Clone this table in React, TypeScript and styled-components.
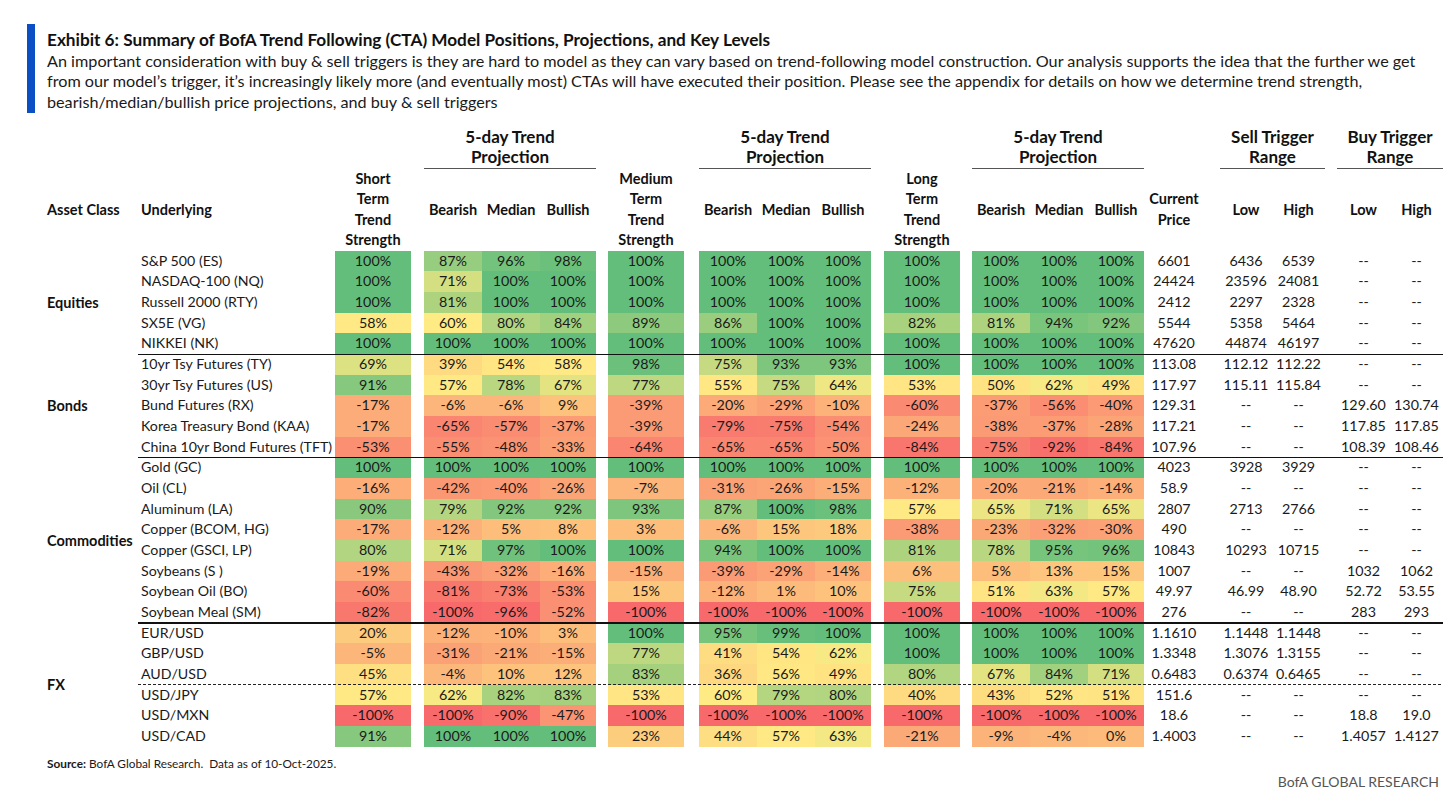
import React from 'react'
import styled, { createGlobalStyle } from 'styled-components'

const GlobalStyle = createGlobalStyle`
  html, body {
    margin: 0;
    padding: 0;
    background: #fff;
  }
  body {
    font-family: Lato, 'Noto Sans', sans-serif;
    color: #1a1a1a;
  }
`

// column widths after the asset class column (underlying ... buy high)
const COLS = [197, 76, 13, 58, 58, 56, 12, 76, 15, 58, 58, 56, 13, 76, 12, 58, 58, 56, 60, 16, 52, 53, 12, 53, 53]
const BODY_COLS = COLS.map((w) => `${w}px`).join(' ')
const ROW_H = 20.67

type RGB = [number, number, number]
const RED: RGB = [248, 105, 107]
const YELLOW: RGB = [255, 235, 132]
const GREEN: RGB = [99, 190, 123]
const MID = 60

const mix = (a: RGB, b: RGB, t: number) =>
  a.map((v, i) => Math.round(v + (b[i] - v) * t)).join(',')

const heat = (v: number) =>
  v <= MID
    ? `rgb(${mix(RED, YELLOW, (v + 100) / (MID + 100))})`
    : `rgb(${mix(YELLOW, GREEN, (v - MID) / (100 - MID))})`

const Page = styled.div`
  width: 1456px;
  height: 808px;
  box-sizing: border-box;
  padding: 24px 0 0 27px;
  overflow: hidden;
`

const Intro = styled.div`
  display: flex;
`

const Bar = styled.div`
  width: 8px;
  flex: none;
  background: #0c4fc4;
`

const IntroText = styled.div`
  margin-left: 12px;
  padding-top: 6px;
  font-size: 16.2px;
  line-height: 20.7px;
  color: #1a1a1a;
`

const Title = styled.div`
  font-weight: 700;
  font-size: 17.2px;
  white-space: nowrap;
  color: #111;
`

const Line = styled.div`
  white-space: nowrap;
`

const Table = styled.div`
  margin: 14px 0 0 20px;
  width: 1396px;
`

const Head = styled.div`
  display: grid;
  grid-template-columns: 91px ${BODY_COLS};
  grid-template-rows: 42px 82px;
  font-weight: 700;
  color: #111;
`

const GroupHead = styled.div<{ $from: number; $to: number }>`
  grid-row: 1;
  grid-column: ${(p) => p.$from} / ${(p) => p.$to};
  border-bottom: 1px solid #555;
  font-size: 17px;
  line-height: 20px;
  text-align: center;
  align-self: end;
  padding-bottom: 1px;
`

const ColHead = styled.div<{ $col: number; $left?: boolean }>`
  grid-row: 2;
  grid-column: ${(p) => p.$col};
  display: flex;
  align-items: center;
  justify-content: ${(p) => (p.$left ? 'flex-start' : 'center')};
  text-align: ${(p) => (p.$left ? 'left' : 'center')};
  padding-left: ${(p) => (p.$col === 2 ? '3px' : '0')};
  font-size: 14.5px;
  line-height: 20.5px;
  white-space: nowrap;
`

const Group = styled.div`
  display: flex;
`

const AssetLabel = styled.div`
  width: 91px;
  flex: none;
  display: flex;
  align-items: center;
  font-weight: 700;
  font-size: 14.5px;
  color: #111;
`

const Rows = styled.div<{ $rule: boolean }>`
  position: relative;
  &::after {
    content: '';
    display: ${(p) => (p.$rule ? 'block' : 'none')};
    position: absolute;
    left: 0;
    right: 0;
    bottom: -1px;
    height: 1.5px;
    background: #111;
    z-index: 1;
  }
`

const Row = styled.div<{ $dashed?: boolean }>`
  position: relative;
  display: grid;
  grid-template-columns: ${BODY_COLS};
  height: ${ROW_H}px;
  line-height: ${ROW_H}px;
  font-size: 14.3px;
  &::after {
    content: '';
    display: ${(p) => (p.$dashed ? 'block' : 'none')};
    position: absolute;
    left: 0;
    right: 0;
    bottom: -0.5px;
    height: 1px;
    background: repeating-linear-gradient(to right, #222 0 3px, transparent 3px 5px);
    z-index: 1;
  }
`

const Name = styled.div`
  padding-left: 3px;
  font-size: 14.2px;
  white-space: nowrap;
`

const Heat = styled.div<{ $bg: string }>`
  background: ${(p) => p.$bg};
  text-align: center;
  white-space: nowrap;
`

const Num = styled.div`
  text-align: center;
  white-space: nowrap;
`

const Gap = styled.div``

const Footer = styled.div`
  display: flex;
  flex-direction: column;
  margin: 7px 0 0 20px;
  width: 1392px;
`

const Source = styled.div`
  font-size: 11.8px;
  line-height: 20px;
  b {
    font-weight: 700;
  }
`

const Brand = styled.div`
  align-self: flex-end;
  margin-top: -1px;
  color: #555;
  font-size: 14px;
  line-height: 18px;
`

type DataRow = [string, number[], string[]]

interface AssetGroup {
  label: string
  dashAfter?: number
  rows: DataRow[]
}

const D = '--'

const GROUPS: AssetGroup[] = [
  {
    label: 'Equities',
    rows: [
      ['S&P 500 (ES)', [100, 87, 96, 98, 100, 100, 100, 100, 100, 100, 100, 100], ['6601', '6436', '6539', D, D]],
      ['NASDAQ-100 (NQ)', [100, 71, 100, 100, 100, 100, 100, 100, 100, 100, 100, 100], ['24424', '23596', '24081', D, D]],
      ['Russell 2000 (RTY)', [100, 81, 100, 100, 100, 100, 100, 100, 100, 100, 100, 100], ['2412', '2297', '2328', D, D]],
      ['SX5E (VG)', [58, 60, 80, 84, 89, 86, 100, 100, 82, 81, 94, 92], ['5544', '5358', '5464', D, D]],
      ['NIKKEI (NK)', [100, 100, 100, 100, 100, 100, 100, 100, 100, 100, 100, 100], ['47620', '44874', '46197', D, D]],
    ],
  },
  {
    label: 'Bonds',
    rows: [
      ['10yr Tsy Futures (TY)', [69, 39, 54, 58, 98, 75, 93, 93, 100, 100, 100, 100], ['113.08', '112.12', '112.22', D, D]],
      ['30yr Tsy Futures (US)', [91, 57, 78, 67, 77, 55, 75, 64, 53, 50, 62, 49], ['117.97', '115.11', '115.84', D, D]],
      ['Bund Futures (RX)', [-17, -6, -6, 9, -39, -20, -29, -10, -60, -37, -56, -40], ['129.31', D, D, '129.60', '130.74']],
      ['Korea Treasury Bond (KAA)', [-17, -65, -57, -37, -39, -79, -75, -54, -24, -38, -37, -28], ['117.21', D, D, '117.85', '117.85']],
      ['China 10yr Bond Futures (TFT)', [-53, -55, -48, -33, -64, -65, -65, -50, -84, -75, -92, -84], ['107.96', D, D, '108.39', '108.46']],
    ],
  },
  {
    label: 'Commodities',
    rows: [
      ['Gold (GC)', [100, 100, 100, 100, 100, 100, 100, 100, 100, 100, 100, 100], ['4023', '3928', '3929', D, D]],
      ['Oil (CL)', [-16, -42, -40, -26, -7, -31, -26, -15, -12, -20, -21, -14], ['58.9', D, D, D, D]],
      ['Aluminum (LA)', [90, 79, 92, 92, 93, 87, 100, 98, 57, 65, 71, 65], ['2807', '2713', '2766', D, D]],
      ['Copper (BCOM, HG)', [-17, -12, 5, 8, 3, -6, 15, 18, -38, -23, -32, -30], ['490', D, D, D, D]],
      ['Copper (GSCI, LP)', [80, 71, 97, 100, 100, 94, 100, 100, 81, 78, 95, 96], ['10843', '10293', '10715', D, D]],
      ['Soybeans (S )', [-19, -43, -32, -16, -15, -39, -29, -14, 6, 5, 13, 15], ['1007', D, D, '1032', '1062']],
      ['Soybean Oil (BO)', [-60, -81, -73, -53, 15, -12, 1, 10, 75, 51, 63, 57], ['49.97', '46.99', '48.90', '52.72', '53.55']],
      ['Soybean Meal (SM)', [-82, -100, -96, -52, -100, -100, -100, -100, -100, -100, -100, -100], ['276', D, D, '283', '293']],
    ],
  },
  {
    label: 'FX',
    dashAfter: 2,
    rows: [
      ['EUR/USD', [20, -12, -10, 3, 100, 95, 99, 100, 100, 100, 100, 100], ['1.1610', '1.1448', '1.1448', D, D]],
      ['GBP/USD', [-5, -31, -21, -15, 77, 41, 54, 62, 100, 100, 100, 100], ['1.3348', '1.3076', '1.3155', D, D]],
      ['AUD/USD', [45, -4, 10, 12, 83, 36, 56, 49, 80, 67, 84, 71], ['0.6483', '0.6374', '0.6465', D, D]],
      ['USD/JPY', [57, 62, 82, 83, 53, 60, 79, 80, 40, 43, 52, 51], ['151.6', D, D, D, D]],
      ['USD/MXN', [-100, -100, -90, -47, -100, -100, -100, -100, -100, -100, -100, -100], ['18.6', D, D, '18.8', '19.0']],
      ['USD/CAD', [91, 100, 100, 100, 23, 44, 57, 63, -21, -9, -4, 0], ['1.4003', D, D, '1.4057', '1.4127']],
    ],
  },
]

const HeatCell = ({ v }: { v: number }) => <Heat $bg={heat(v)}>{v}%</Heat>

const Projection = ({ vals }: { vals: number[] }) => (
  <>
    {vals.map((v, i) => (
      <HeatCell key={i} v={v} />
    ))}
  </>
)

const DataLine = ({ row, dashed }: { row: DataRow; dashed?: boolean }) => {
  const [name, p, n] = row
  return (
    <Row $dashed={dashed}>
      <Name>{name}</Name>
      <HeatCell v={p[0]} />
      <Gap />
      <Projection vals={p.slice(1, 4)} />
      <Gap />
      <HeatCell v={p[4]} />
      <Gap />
      <Projection vals={p.slice(5, 8)} />
      <Gap />
      <HeatCell v={p[8]} />
      <Gap />
      <Projection vals={p.slice(9, 12)} />
      <Num>{n[0]}</Num>
      <Gap />
      <Num>{n[1]}</Num>
      <Num>{n[2]}</Num>
      <Gap />
      <Num>{n[3]}</Num>
      <Num>{n[4]}</Num>
    </Row>
  )
}

const ProjHeads = ({ start }: { start: number }) => (
  <>
    <ColHead $col={start}>Bearish</ColHead>
    <ColHead $col={start + 1}>Median</ColHead>
    <ColHead $col={start + 2}>Bullish</ColHead>
  </>
)

export default function App() {
  return (
    <Page>
      <GlobalStyle />
      <Intro>
        <Bar />
        <IntroText>
          <Title>Exhibit 6: Summary of BofA Trend Following (CTA) Model Positions, Projections, and Key Levels</Title>
          <Line>
            An important consideration with buy &amp; sell triggers is they are hard to model as they can vary based on
            trend-following model construction. Our analysis supports the idea that the further we get
          </Line>
          <Line>
            from our model’s trigger, it’s increasingly likely more (and eventually most) CTAs will have executed their
            position. Please see the appendix for details on how we determine trend strength,
          </Line>
          <Line>bearish/median/bullish price projections, and buy &amp; sell triggers</Line>
        </IntroText>
      </Intro>

      <Table>
        <Head>
          <GroupHead $from={5} $to={8}>5-day Trend<br />Projection</GroupHead>
          <GroupHead $from={11} $to={14}>5-day Trend<br />Projection</GroupHead>
          <GroupHead $from={17} $to={20}>5-day Trend<br />Projection</GroupHead>
          <GroupHead $from={22} $to={24}>Sell Trigger<br />Range</GroupHead>
          <GroupHead $from={25} $to={27}>Buy Trigger<br />Range</GroupHead>

          <ColHead $col={1} $left>Asset Class</ColHead>
          <ColHead $col={2} $left>Underlying</ColHead>
          <ColHead $col={3}>Short<br />Term<br />Trend<br />Strength</ColHead>
          <ProjHeads start={5} />
          <ColHead $col={9}>Medium<br />Term<br />Trend<br />Strength</ColHead>
          <ProjHeads start={11} />
          <ColHead $col={15}>Long<br />Term<br />Trend<br />Strength</ColHead>
          <ProjHeads start={17} />
          <ColHead $col={20}>Current<br />Price</ColHead>
          <ColHead $col={22}>Low</ColHead>
          <ColHead $col={23}>High</ColHead>
          <ColHead $col={25}>Low</ColHead>
          <ColHead $col={26}>High</ColHead>
        </Head>

        {GROUPS.map((g, gi) => (
          <Group key={g.label}>
            <AssetLabel>{g.label}</AssetLabel>
            <Rows $rule={gi < GROUPS.length - 1}>
              {g.rows.map((r, ri) => (
                <DataLine key={r[0]} row={r} dashed={g.dashAfter === ri} />
              ))}
            </Rows>
          </Group>
        ))}
      </Table>

      <Footer>
        <Source>
          <b>Source:</b> BofA Global Research.&nbsp; Data as of 10-Oct-2025.
        </Source>
        <Brand>BofA GLOBAL RESEARCH</Brand>
      </Footer>
    </Page>
  )
}
